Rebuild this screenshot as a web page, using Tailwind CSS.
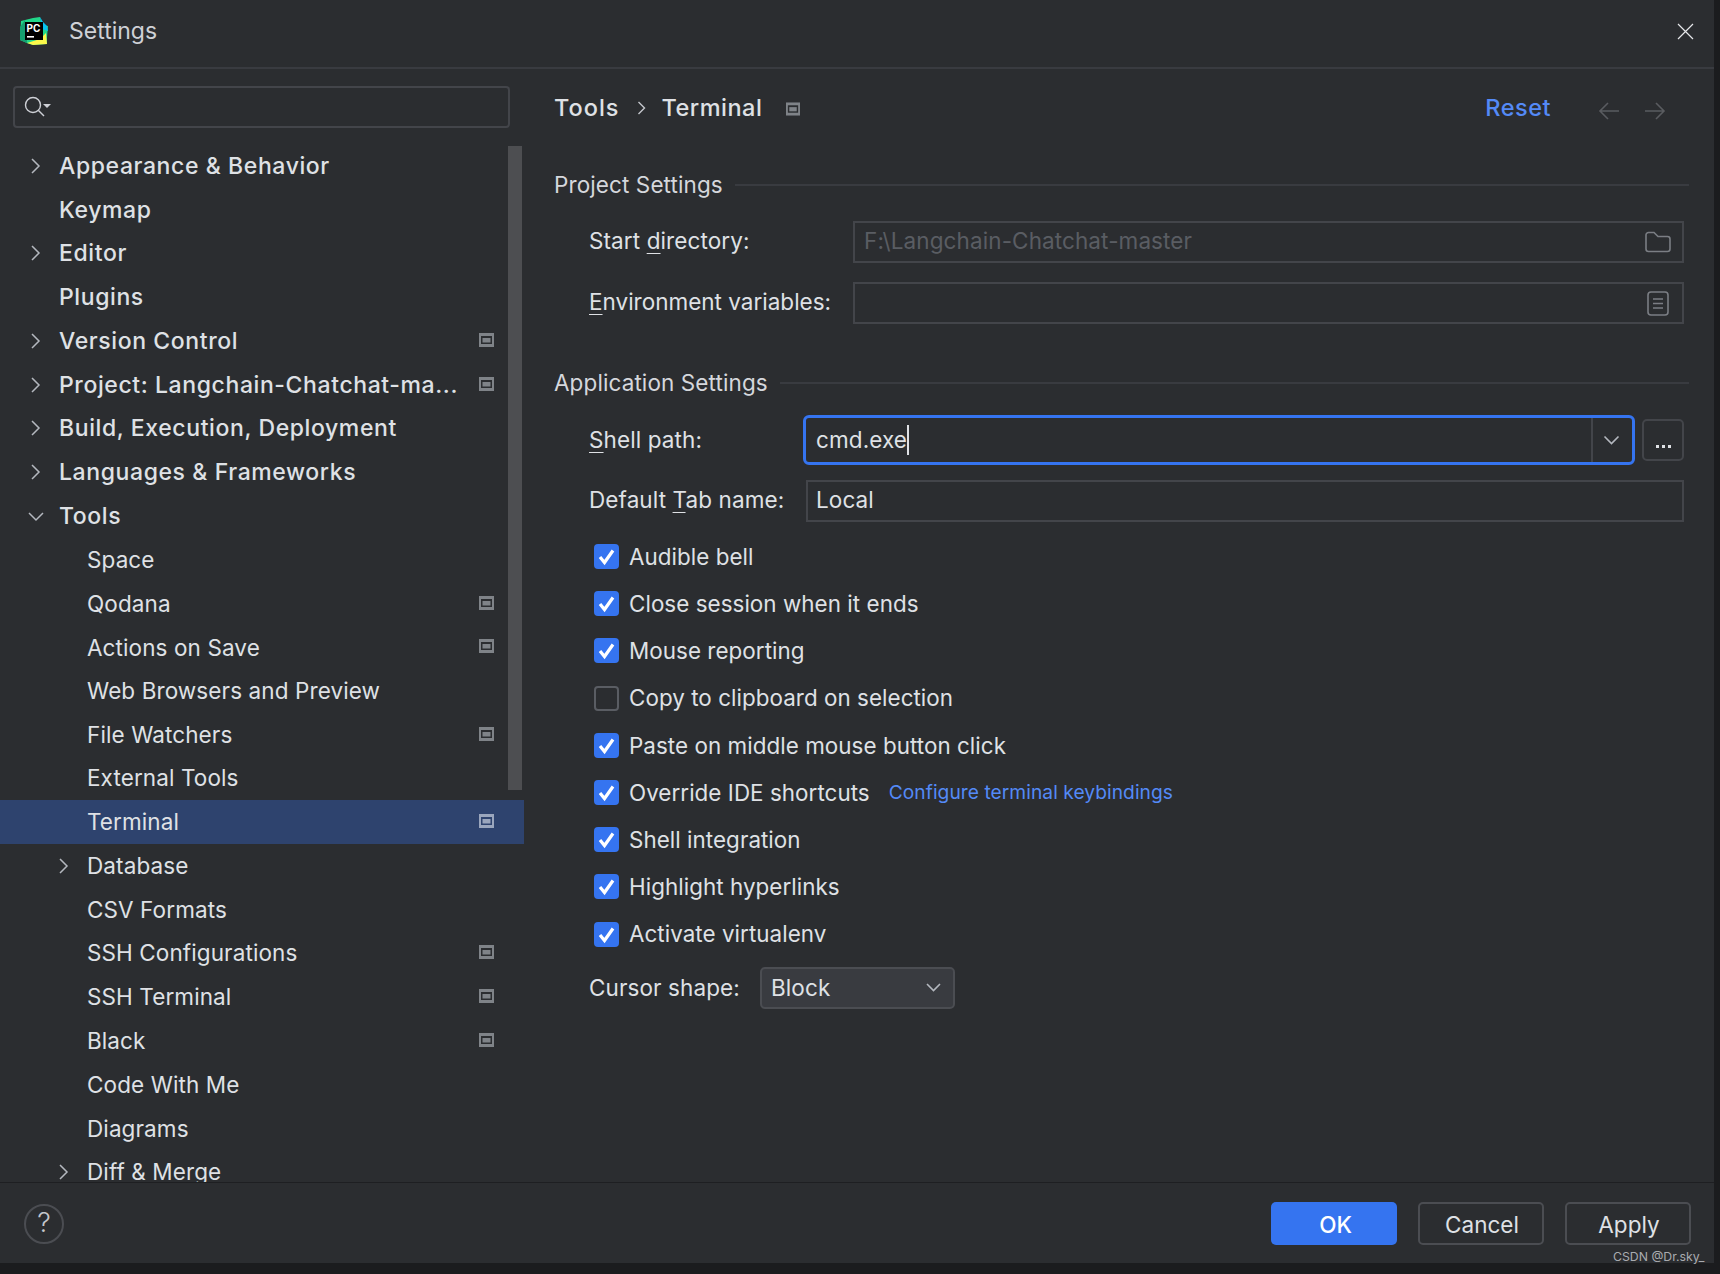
<!DOCTYPE html>
<html>
<head>
<meta charset="utf-8">
<title>Settings</title>
<script src="https://cdn.jsdelivr.net/npm/@tailwindcss/browser@4"></script>
</head>
<body class="bg-[#1b1c1e] font-['Inter',sans-serif] text-[#dfe1e5] overflow-hidden">
<div class="w-[1720px] h-[1274px] overflow-hidden relative">
  <div class="w-[1714px] h-[1263px] bg-[#2b2d30] flex flex-col">

    <!-- Title bar -->
    <div class="h-[69px] shrink-0 border-b-2 border-[#393b40] flex items-center pl-[20px] pr-[20px]">
      <div class="relative w-[28px] h-[28px] shrink-0 -mt-[5px]">
        <svg class="absolute inset-0" width="28" height="28" viewBox="0 0 28 28">
          <polygon points="1,4 13,1 20,0 22,8 28,9 27,20 27,27 13,28 7,26 0,23" fill="#21d789"/>
          <polygon points="20,0 23,5 27,9 28,14 22,12" fill="#07c3f2"/>
          <polygon points="7,26 13,28 27,27 26,16 20,22" fill="#fcf84a"/>
          <polygon points="0,10 5,3 7,20 7,26 0,23" fill="#16a070"/>
          <rect x="5" y="5" width="18" height="18" fill="#000"/>
          <rect x="7" y="19" width="7" height="1.6" fill="#fff"/>
        </svg>
        <span class="absolute left-[6.5px] top-[5px] text-[10px] leading-[12px] font-bold text-white">PC</span>
      </div>
      <span class="ml-[21px] text-[23px] text-[#cfd1d6] leading-none -mt-[5px]">Settings</span>
      <svg class="ml-auto -mt-[5px]" width="17" height="17" viewBox="0 0 17 17"><path d="M1 1L16 16M16 1L1 16" stroke="#e6e7ea" stroke-width="1.2" fill="none"/></svg>
    </div>

    <!-- Body -->
    <div class="flex flex-1 min-h-0">

      <!-- Sidebar -->
      <div class="w-[524px] shrink-0 relative flex flex-col min-h-0">
        <div class="mt-[17px] ml-[13px] w-[497px] h-[42px] shrink-0 border-2 border-[#43454a] rounded-[4px] flex items-center pl-[9px]">
          <svg width="28" height="24" viewBox="0 0 28 24" fill="none">
            <circle cx="9" cy="10" r="7.500" stroke="#ced0d6" stroke-width="1.400"/>
            <path d="M14.500 15.500L20 21" stroke="#ced0d6" stroke-width="1.400"/>
            <path d="M19 9H27L23 13Z" fill="#ced0d6"/>
          </svg>
        </div>
        <div class="absolute left-[508px] top-[77px] w-[14px] h-[644px] bg-[#4d4e51]"></div>

        <div class="mt-[16px] flex-1 min-h-0 overflow-hidden text-[22.500px] tracking-[0.1px]">
          <div class="h-[43.74px] flex items-center font-medium text-[23px] tracking-[0.6px] pl-[29px]">
            <svg class="w-[12px] h-[18px] shrink-0 mr-[18px]" viewBox="0 0 12 18" fill="none"><path d="M3 2L10 9L3 16" stroke="#b4b8bf" stroke-width="1.500"/></svg>Appearance &amp; Behavior
          </div>
          <div class="h-[43.74px] flex items-center font-medium text-[23px] tracking-[0.6px] pl-[59px] pt-[2px]">Keymap</div>
          <div class="h-[43.74px] flex items-center font-medium text-[23px] tracking-[0.6px] pl-[29px]">
            <svg class="w-[12px] h-[18px] shrink-0 mr-[18px]" viewBox="0 0 12 18" fill="none"><path d="M3 2L10 9L3 16" stroke="#b4b8bf" stroke-width="1.500"/></svg>Editor
          </div>
          <div class="h-[43.74px] flex items-center font-medium text-[23px] tracking-[0.6px] pl-[59px]">Plugins</div>
          <div class="h-[43.74px] flex items-center font-medium text-[23px] tracking-[0.6px] pl-[29px] pr-[30px]">
            <svg class="w-[12px] h-[18px] shrink-0 mr-[18px]" viewBox="0 0 12 18" fill="none"><path d="M3 2L10 9L3 16" stroke="#b4b8bf" stroke-width="1.500"/></svg>Version Control
            <svg class="ml-auto -mt-[2px]" width="15" height="14" viewBox="0 0 15 14"><rect width="15" height="14" fill="#7f8388"/><rect x="2" y="3" width="11" height="8" fill="#2b2d30"/><rect x="3.500" y="5" width="8" height="4.500" fill="#7f8388"/></svg>
          </div>
          <div class="h-[43.74px] flex items-center font-medium text-[23px] tracking-[0.6px] pl-[29px] pr-[30px] pt-[1px]">
            <svg class="w-[12px] h-[18px] shrink-0 mr-[18px]" viewBox="0 0 12 18" fill="none"><path d="M3 2L10 9L3 16" stroke="#b4b8bf" stroke-width="1.500"/></svg>Project: Langchain-Chatchat-ma...
            <svg class="ml-auto -mt-[2px]" width="15" height="14" viewBox="0 0 15 14"><rect width="15" height="14" fill="#7f8388"/><rect x="2" y="3" width="11" height="8" fill="#2b2d30"/><rect x="3.500" y="5" width="8" height="4.500" fill="#7f8388"/></svg>
          </div>
          <div class="h-[43.74px] flex items-center font-medium text-[23px] tracking-[0.6px] pl-[29px]">
            <svg class="w-[12px] h-[18px] shrink-0 mr-[18px]" viewBox="0 0 12 18" fill="none"><path d="M3 2L10 9L3 16" stroke="#b4b8bf" stroke-width="1.500"/></svg>Build, Execution, Deployment
          </div>
          <div class="h-[43.74px] flex items-center font-medium text-[23px] tracking-[0.6px] pl-[29px]">
            <svg class="w-[12px] h-[18px] shrink-0 mr-[18px]" viewBox="0 0 12 18" fill="none"><path d="M3 2L10 9L3 16" stroke="#b4b8bf" stroke-width="1.500"/></svg>Languages &amp; Frameworks
          </div>
          <div class="h-[43.74px] flex items-center font-medium text-[23px] tracking-[0.6px] pl-[27px] pt-[1px]">
            <svg class="w-[18px] h-[12px] shrink-0 mr-[14px]" viewBox="0 0 18 12" fill="none"><path d="M2 3L9 10L16 3" stroke="#b4b8bf" stroke-width="1.500"/></svg>Tools
          </div>
          <div class="h-[43.74px] flex items-center pl-[87px] pt-[1px]">Space</div>
          <div class="h-[43.74px] flex items-center pl-[87px] pr-[30px] pt-[1px]">Qodana
            <svg class="ml-auto -mt-[2px]" width="15" height="14" viewBox="0 0 15 14"><rect width="15" height="14" fill="#7f8388"/><rect x="2" y="3" width="11" height="8" fill="#2b2d30"/><rect x="3.500" y="5" width="8" height="4.500" fill="#7f8388"/></svg>
          </div>
          <div class="h-[43.74px] flex items-center pl-[87px] pr-[30px] pt-[1px]">Actions on Save
            <svg class="ml-auto -mt-[2px]" width="15" height="14" viewBox="0 0 15 14"><rect width="15" height="14" fill="#7f8388"/><rect x="2" y="3" width="11" height="8" fill="#2b2d30"/><rect x="3.500" y="5" width="8" height="4.500" fill="#7f8388"/></svg>
          </div>
          <div class="h-[43.74px] flex items-center pl-[87px] pt-[1px]">Web Browsers and Preview</div>
          <div class="h-[43.74px] flex items-center pl-[87px] pr-[30px] pt-[1px]">File Watchers
            <svg class="ml-auto -mt-[2px]" width="15" height="14" viewBox="0 0 15 14"><rect width="15" height="14" fill="#7f8388"/><rect x="2" y="3" width="11" height="8" fill="#2b2d30"/><rect x="3.500" y="5" width="8" height="4.500" fill="#7f8388"/></svg>
          </div>
          <div class="h-[43.74px] flex items-center pl-[87px]">External Tools</div>
          <div class="h-[43.74px] flex items-center pl-[87px] pr-[30px] bg-[#2e436e]">Terminal
            <svg class="ml-auto -mt-[2px]" width="15" height="14" viewBox="0 0 15 14"><rect width="15" height="14" fill="#9aa6bd"/><rect x="2" y="3" width="11" height="8" fill="#2e436e"/><rect x="3.500" y="5" width="8" height="4.500" fill="#9aa6bd"/></svg>
          </div>
          <div class="h-[43.74px] flex items-center pl-[57px] pt-[1px]">
            <svg class="w-[12px] h-[18px] shrink-0 mr-[18px]" viewBox="0 0 12 18" fill="none"><path d="M3 2L10 9L3 16" stroke="#b4b8bf" stroke-width="1.500"/></svg>Database
          </div>
          <div class="h-[43.74px] flex items-center pl-[87px] pt-[1px]">CSV Formats</div>
          <div class="h-[43.74px] flex items-center pl-[87px] pr-[30px]">SSH Configurations
            <svg class="ml-auto -mt-[2px]" width="15" height="14" viewBox="0 0 15 14"><rect width="15" height="14" fill="#7f8388"/><rect x="2" y="3" width="11" height="8" fill="#2b2d30"/><rect x="3.500" y="5" width="8" height="4.500" fill="#7f8388"/></svg>
          </div>
          <div class="h-[43.74px] flex items-center pl-[87px] pr-[30px] pt-[1px]">SSH Terminal
            <svg class="ml-auto -mt-[2px]" width="15" height="14" viewBox="0 0 15 14"><rect width="15" height="14" fill="#7f8388"/><rect x="2" y="3" width="11" height="8" fill="#2b2d30"/><rect x="3.500" y="5" width="8" height="4.500" fill="#7f8388"/></svg>
          </div>
          <div class="h-[43.74px] flex items-center pl-[87px] pr-[30px] pt-[1px]">Black
            <svg class="ml-auto -mt-[2px]" width="15" height="14" viewBox="0 0 15 14"><rect width="15" height="14" fill="#7f8388"/><rect x="2" y="3" width="11" height="8" fill="#2b2d30"/><rect x="3.500" y="5" width="8" height="4.500" fill="#7f8388"/></svg>
          </div>
          <div class="h-[43.74px] flex items-center pl-[87px] pt-[1px]">Code With Me</div>
          <div class="h-[43.74px] flex items-center pl-[87px] pt-[1px]">Diagrams</div>
          <div class="h-[43.74px] flex items-center pl-[57px] pt-[1px]">
            <svg class="w-[12px] h-[18px] shrink-0 mr-[18px]" viewBox="0 0 12 18" fill="none"><path d="M3 2L10 9L3 16" stroke="#b4b8bf" stroke-width="1.500"/></svg>Diff &amp; Merge
          </div>
        </div>
      </div>

      <!-- Content -->
      <div class="flex-1 min-w-0 pl-[30px] pr-[30px] text-[22.500px] tracking-[0.1px]">
        <div class="h-[78px] flex items-center">
          <span class="font-medium text-[23.500px] tracking-[1px]">Tools</span>
          <svg class="ml-[18px] mr-[15px]" width="9" height="16" viewBox="0 0 9 16" fill="none"><path d="M1.500 2L7.500 8L1.500 14" stroke="#c4c7cc" stroke-width="1.400"/></svg>
          <span class="font-medium text-[23.500px] tracking-[0.5px]">Terminal</span>
          <svg class="ml-[24px] mt-[2px]" width="14" height="14" viewBox="0 0 15 14"><rect width="15" height="14" fill="#7f8388"/><rect x="2" y="3" width="11" height="8" fill="#2b2d30"/><rect x="3.500" y="5" width="8" height="4.500" fill="#7f8388"/></svg>
          <span class="ml-auto text-[#548af7] font-medium text-[23.500px] tracking-[0.5px]">Reset</span>
          <svg class="ml-[47px] mt-[5px]" width="22" height="18" viewBox="0 0 22 18" fill="none"><path d="M21 9H2M10 1L2 9L10 17" stroke="#5a5c60" stroke-width="1.600"/></svg>
          <svg class="ml-[24px] mr-[18px] mt-[5px]" width="22" height="18" viewBox="0 0 22 18" fill="none"><path d="M1 9H20M12 1L20 9L12 17" stroke="#5a5c60" stroke-width="1.600"/></svg>
        </div>

        <!-- Project Settings -->
        <div class="h-[36px] mt-[20px] flex items-center">
          <span class="text-[#d5d7dc]">Project Settings</span>
          <div class="ml-[12px] flex-1 h-[2px] bg-[#393b40] -mr-[5px]"></div>
        </div>
        <div class="mt-[18px] flex items-center h-[42px] pl-[35px]">
          <span class="w-[264px] shrink-0 whitespace-nowrap pb-[2px]">Start <span class="underline underline-offset-[4px] decoration-1">d</span>irectory:</span>
          <div class="flex-1 h-[42px] border-2 border-[#43454a] flex items-center pl-[9px] pr-[11px] text-[#5a5d63]">
            <span class="pb-[2px]">F:\Langchain-Chatchat-master</span>
            <svg class="ml-auto" width="26" height="22" viewBox="0 0 26 22" fill="none"><path d="M1 4a2.500 2.500 0 012.500-2.500h5.500l4 4h9.500a2.500 2.500 0 012.500 2.500v10a2.500 2.500 0 01-2.500 2.500h-19a2.500 2.500 0 01-2.500-2.500z" stroke="#7b7e84" stroke-width="1.600"/></svg>
          </div>
        </div>
        <div class="mt-[19px] flex items-center h-[42px] pl-[35px]">
          <span class="w-[264px] shrink-0 whitespace-nowrap pb-[2px] tracking-normal"><span class="underline underline-offset-[4px] decoration-1">E</span>nvironment variables:</span>
          <div class="flex-1 h-[42px] border-2 border-[#43454a] flex items-center pr-[13px]">
            <svg class="ml-auto" width="22" height="25" viewBox="0 0 22 25" fill="none"><rect x="1" y="1" width="20" height="23" rx="3" stroke="#7b7e84" stroke-width="1.600"/><path d="M6 8H16M6 12.500H16M6 17H16" stroke="#7b7e84" stroke-width="1.600"/></svg>
          </div>
        </div>

        <!-- Application Settings -->
        <div class="h-[36px] mt-[41px] flex items-center">
          <span class="text-[#d5d7dc]">Application Settings</span>
          <div class="ml-[12px] flex-1 h-[2px] bg-[#393b40] -mr-[5px]"></div>
        </div>
        <div class="mt-[14px] flex items-center h-[50px] pl-[35px]">
          <span class="w-[214px] shrink-0 pb-[1px]"><span class="underline underline-offset-[4px] decoration-1">S</span>hell path:</span>
          <div class="w-[832px] h-[50px] border-[3px] border-[#3574f0] rounded-[6px] flex items-center pl-[10px] shrink-0">
            <span class="pb-[1px]">cmd.exe</span><span class="w-[2px] h-[30px] bg-[#dfe1e5]"></span>
            <div class="ml-auto w-[41px] h-full border-l-2 border-[#43454a] flex items-center justify-center pr-[3px]">
              <svg width="17" height="10" viewBox="0 0 17 10" fill="none"><path d="M1.500 1.500L8.500 8.500L15.500 1.500" stroke="#b4b8bf" stroke-width="1.600"/></svg>
            </div>
          </div>
          <div class="ml-[7px] w-[42px] h-[42px] border-2 border-[#43454a] rounded-[5px] flex items-center justify-center gap-[3px] pt-[12px] shrink-0">
            <span class="w-[3px] h-[3px] bg-[#dfe1e5]"></span><span class="w-[3px] h-[3px] bg-[#dfe1e5]"></span><span class="w-[3px] h-[3px] bg-[#dfe1e5]"></span>
          </div>
        </div>
        <div class="mt-[15px] flex items-center h-[42px] pl-[35px]">
          <span class="w-[217px] shrink-0 whitespace-nowrap pb-[2px]">Default <span class="underline underline-offset-[4px] decoration-1">T</span>ab name:</span>
          <div class="flex-1 h-[42px] border-2 border-[#43454a] flex items-center pl-[8px] pb-[2px]">Local</div>
        </div>

        <!-- Checkboxes -->
        <div class="mt-[11px] pl-[40px] text-[22.400px] tracking-[0.05px]">
          <div class="h-[47.2px] flex items-center">
            <svg class="mr-[10px]" width="25" height="25" viewBox="0 0 25 25"><rect width="25" height="25" rx="4" fill="#3574f0"/><path d="M6 13L10.500 18.500L19 6.500" stroke="#fff" stroke-width="3.200" fill="none"/></svg>Audible bell
          </div>
          <div class="h-[47.2px] flex items-center">
            <svg class="mr-[10px]" width="25" height="25" viewBox="0 0 25 25"><rect width="25" height="25" rx="4" fill="#3574f0"/><path d="M6 13L10.500 18.500L19 6.500" stroke="#fff" stroke-width="3.200" fill="none"/></svg>Close session when it ends
          </div>
          <div class="h-[47.2px] flex items-center">
            <svg class="mr-[10px]" width="25" height="25" viewBox="0 0 25 25"><rect width="25" height="25" rx="4" fill="#3574f0"/><path d="M6 13L10.500 18.500L19 6.500" stroke="#fff" stroke-width="3.200" fill="none"/></svg>Mouse reporting
          </div>
          <div class="h-[47.2px] flex items-center">
            <span class="w-[25px] h-[25px] mr-[10px] border-2 border-[#5a5d63] rounded-[4px]"></span>Copy to clipboard on selection
          </div>
          <div class="h-[47.2px] flex items-center">
            <svg class="mr-[10px]" width="25" height="25" viewBox="0 0 25 25"><rect width="25" height="25" rx="4" fill="#3574f0"/><path d="M6 13L10.500 18.500L19 6.500" stroke="#fff" stroke-width="3.200" fill="none"/></svg>Paste on middle mouse button click
          </div>
          <div class="h-[47.2px] flex items-center">
            <svg class="mr-[10px]" width="25" height="25" viewBox="0 0 25 25"><rect width="25" height="25" rx="4" fill="#3574f0"/><path d="M6 13L10.500 18.500L19 6.500" stroke="#fff" stroke-width="3.200" fill="none"/></svg>Override IDE shortcuts
            <span class="ml-[19px] text-[19.200px] text-[#548af7]">Configure terminal keybindings</span>
          </div>
          <div class="h-[47.2px] flex items-center">
            <svg class="mr-[10px]" width="25" height="25" viewBox="0 0 25 25"><rect width="25" height="25" rx="4" fill="#3574f0"/><path d="M6 13L10.500 18.500L19 6.500" stroke="#fff" stroke-width="3.200" fill="none"/></svg>Shell integration
          </div>
          <div class="h-[47.2px] flex items-center">
            <svg class="mr-[10px]" width="25" height="25" viewBox="0 0 25 25"><rect width="25" height="25" rx="4" fill="#3574f0"/><path d="M6 13L10.500 18.500L19 6.500" stroke="#fff" stroke-width="3.200" fill="none"/></svg>Highlight hyperlinks
          </div>
          <div class="h-[47.2px] flex items-center">
            <svg class="mr-[10px]" width="25" height="25" viewBox="0 0 25 25"><rect width="25" height="25" rx="4" fill="#3574f0"/><path d="M6 13L10.500 18.500L19 6.500" stroke="#fff" stroke-width="3.200" fill="none"/></svg>Activate virtualenv
          </div>
        </div>

        <div class="mt-[9px] flex items-center pl-[35px]">
          <span class="w-[171px] shrink-0">Cursor shape:</span>
          <div class="w-[195px] h-[42px] bg-[#393b40] border-2 border-[#4b4d52] rounded-[5px] flex items-center pl-[9px] pr-[12px]">
            Block
            <svg class="ml-auto" width="15" height="9" viewBox="0 0 15 9" fill="none"><path d="M1 1L7.500 7.500L14 1" stroke="#b4b8bf" stroke-width="1.600"/></svg>
          </div>
        </div>
      </div>
    </div>

    <!-- Footer -->
    <div class="h-[81px] shrink-0 border-t border-[#1e1f22] flex items-center pl-[24px] pr-[23px] pt-[1px] text-[22.500px]">
      <div class="w-[40px] h-[40px] rounded-full border-2 border-[#4b4d52] flex items-center justify-center text-[#c4c7cc] text-[27px] font-light">?</div>
      <button class="ml-auto w-[126px] h-[43px] pt-[3px] pl-[3px] rounded-[5px] bg-[#3574f0] text-white font-medium">OK</button>
      <button class="ml-[21px] w-[126px] h-[43px] pt-[2px] pl-[2px] rounded-[5px] border-2 border-[#4b4d52]">Cancel</button>
      <button class="ml-[21px] w-[126px] h-[43px] pt-[2px] pl-[2px] rounded-[5px] border-2 border-[#4b4d52]">Apply</button>
    </div>
  </div>
  <span class="absolute left-[1613px] top-[1249px] text-[12.300px] leading-[16px] text-[#a9abaf]">CSDN @Dr.sky_</span>
</div>
</body>
</html>
